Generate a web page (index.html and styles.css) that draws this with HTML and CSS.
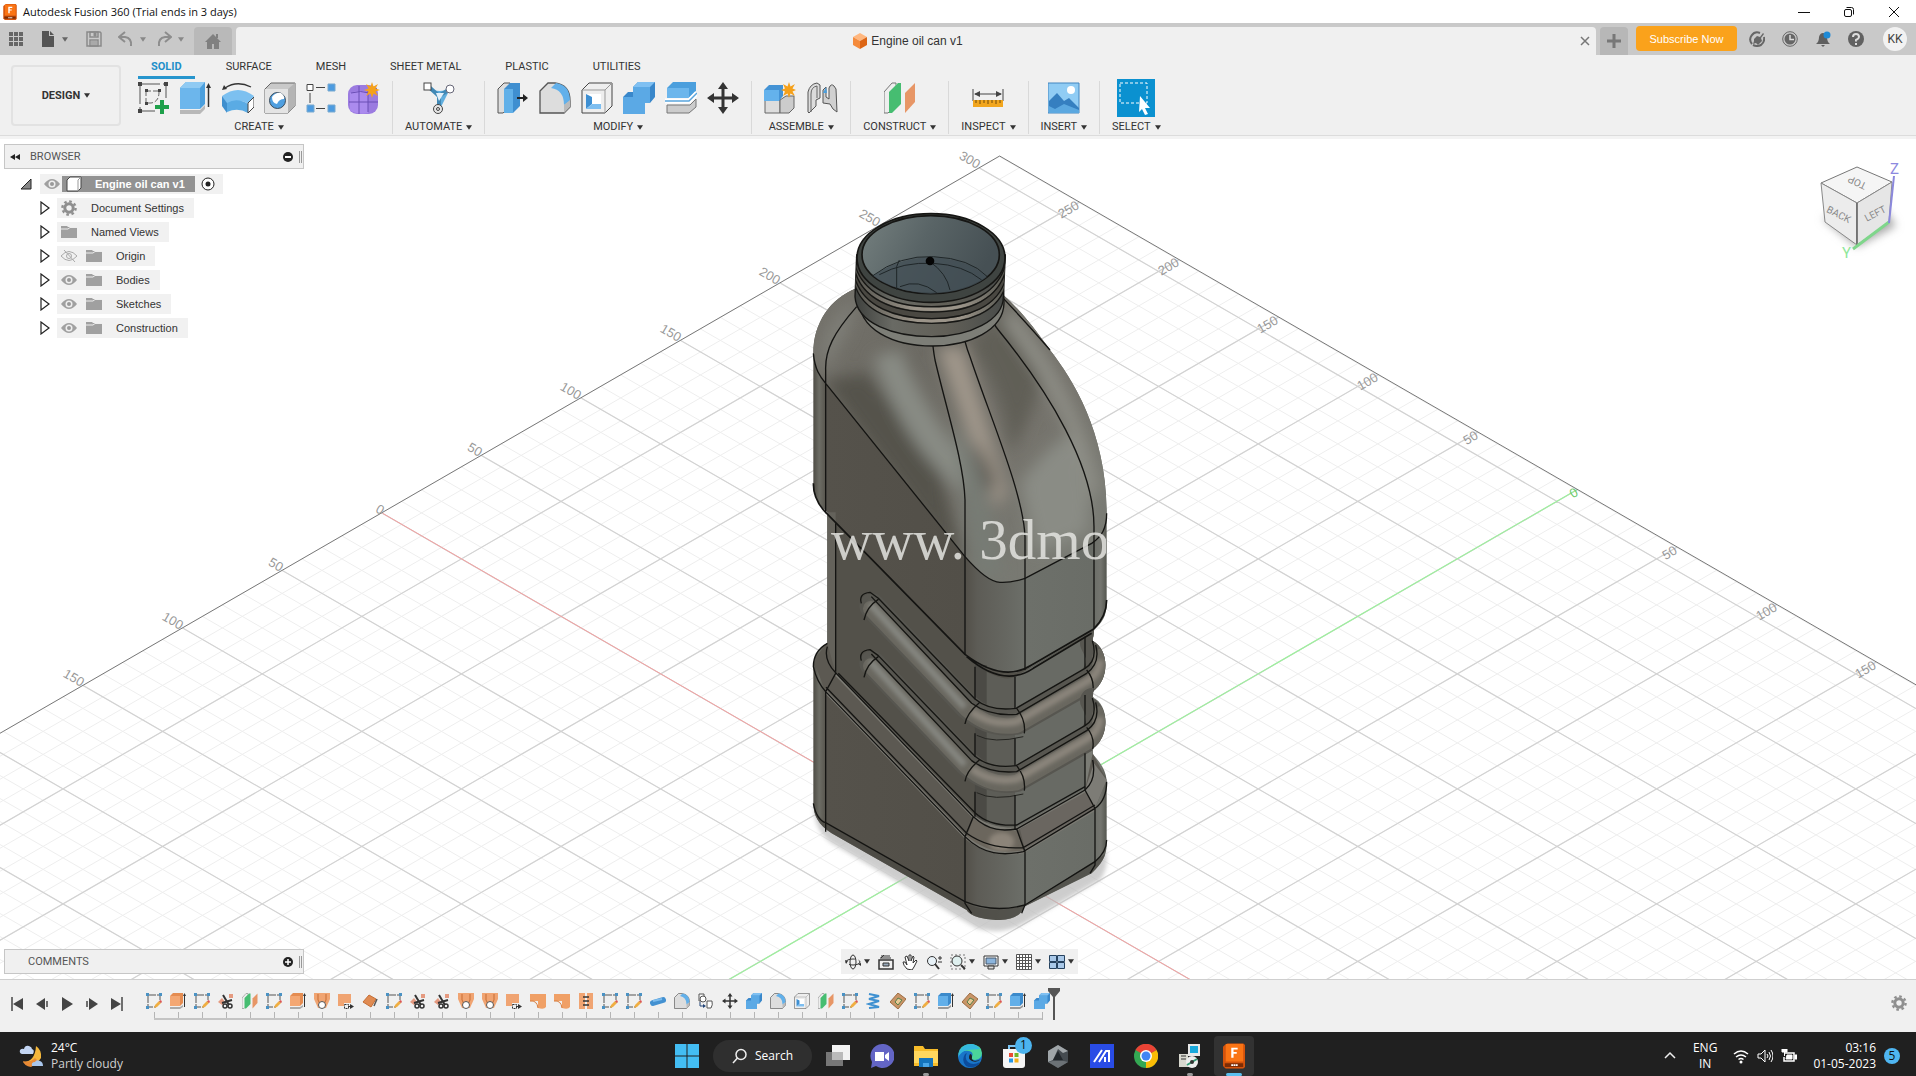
FILE: index.html
```html
<!DOCTYPE html>
<html lang="en">
<head>
<meta charset="utf-8">
<title>Autodesk Fusion 360</title>
<link rel="stylesheet" href="styles.css">
</head>
<body>
<svg class="defs" aria-hidden="true">
  <defs>
    <symbol id="caret" viewBox="0 0 8 6"><path d="M0 0h8L4 6z" fill="currentColor"/></symbol>
    <symbol id="fusion" viewBox="0 0 24 28"><path d="M2 2l3-2h17l2 2v24l-2 2H3l-3-3V4z" fill="#d4530c"/><path d="M3 1h19v19H3z" fill="#fa7414"/><path d="M9 16V5h7v2h-4.500v2.500H15v2h-3.500V16z" fill="#fff"/><path d="M2 22h20v4H2z" fill="#7d2c05"/><path d="M9 24h7" stroke="#fff" stroke-width="2" stroke-dasharray="2 .5"/></symbol>
    <symbol id="box" viewBox="0 0 14 16"><path d="M7 0l7 4-7 4-7-4z" fill="#ffb77f"/><path d="M0 4l7 4v8l-7-4z" fill="#f58b3c"/><path d="M14 4L7 8v8l7-4z" fill="#dc6514"/></symbol>

    <symbol id="sketch" viewBox="0 0 32 32"><path d="M2 2h26v14M2 2v27h15" fill="none" stroke="#555" stroke-dasharray="20 3"/><path d="M8 9h14M8 9v12h5q8-1 8-11" fill="none" stroke="#666" stroke-dasharray="5 2"/><path d="M0 0h4v4H0zM26 0h4v4h-4zM0 27h4v4H0zM7 7h3v3H7zM20 7h3v3h-3zM7 20h3v3H7z" fill="#444"/><path d="M24 18v14M17 25h14" stroke="#1ea04a" stroke-width="4"/></symbol>
    <symbol id="extrude" viewBox="0 0 32 32"><path d="M0 28h20l5-5v4l-5 5H0z" fill="#b8b8b8"/><path d="M0 6l6-6h19v22l-5 5H0z" fill="#4b9fdd"/><path d="M0 6h20v21H0z" fill="#6cb6ec"/><path d="M0 6l6-6h19l-5 6z" fill="#8fcaf3"/><path d="M28.500 25V4" stroke="#333" stroke-width="1.500"/><path d="M26 6l2.500-5L31 6z" fill="#333"/></symbol>
    <symbol id="revolve" viewBox="0 0 32 32"><path d="M3 6q12-8 26-1" fill="none" stroke="#333" stroke-width="1.300"/><path d="M0 8l2-5 3 4z" fill="#333"/><path d="M0 14q16-12 32 0l-5 8q-10-6-22 0z" fill="#7cc0f0"/><path d="M0 14l5 7v10L0 24z" fill="#3f8fce"/><path d="M5 21q10-6 21 1v9q-10-6-21-1z" fill="#5aabe4"/><path d="M26 21l6-6v10l-6 6z" fill="#fff" stroke="#444"/></symbol>
    <symbol id="hole" viewBox="0 0 32 32"><path d="M1 7l6-6h24v23l-7 7H1z" fill="#c9c9c9" stroke="#666"/><path d="M1 7h23v24H1z" fill="#e4e4e4"/><path d="M24 7l7-6v23l-7 7z" fill="#b4b4b4"/><circle cx="13.500" cy="18.500" r="8" fill="#4f9fe0" stroke="#3b4c5c"/><path d="M8 15q4-5 9-4 4 3 3 6-5 0-7 5-5-1-5-7z" fill="#fff"/></symbol>
    <symbol id="pattern" viewBox="0 0 32 32"><path d="M4 11v10M10 5.500h9M10 26.500h9" stroke="#444"/><path d="M1 2.500h6v6H1z" fill="#fff" stroke="#444"/><path d="M22 2h7v7h-7zM22 23h7v7h-7zM1 23h7v7H1z" fill="#4d9be0" stroke="#78a9cf"/></symbol>
    <symbol id="form" viewBox="0 0 32 32"><rect y="3" width="30" height="29" rx="9" fill="#9b7be0"/><path d="M2 11q10-4 18 0v20q-8 2-18-2z" fill="#ab8bee"/><path d="M11 4v28M1 20h29M20 8v22M3 11q10-3 18 0l8-5" fill="none" stroke="#6b4eb5"/><path d="M24 0l1.500 4.500L30 2l-2.500 4.500L32 8l-4.500 1.500L30 14l-4.500-2.500L24 16l-1.500-4.500L18 14l2.500-4.500L16 8l4.500-1.500L18 2l4.500 2.500z" fill="#f5a11b"/></symbol>
    <symbol id="automate" viewBox="0 0 32 32"><path d="M5 5q9 7 22 2L17 27q0-13-12-22z" fill="#61aede"/><path d="M6 5l10 9 11-7M16 14v12" fill="none" stroke="#4189b6" stroke-width="4"/><path d="M13 11l8 0-5 8z" fill="#e4f1fa"/><rect x="1" y="1" width="7" height="7" fill="#fff" stroke="#444"/><circle cx="27" cy="7" r="4" fill="#fff" stroke="#667" /><circle cx="15" cy="27" r="4.500" fill="#e6e6e6" stroke="#444"/><circle cx="15" cy="27" r="1.500" fill="none" stroke="#444"/></symbol>
    <symbol id="presspull" viewBox="0 0 32 32"><path d="M1 7l6-6h6v24l-7 6H1z" fill="#ddd" stroke="#555"/><path d="M7 7l6-6h10v23l-7 7H7z" fill="#3f8fd0"/><path d="M7 7h9v24H7z" fill="#61b0e8"/><path d="M20 16h7" stroke="#222" stroke-width="2"/><path d="M26 12l5 4-5 4z" fill="#222"/></symbol>
    <symbol id="fillet" viewBox="0 0 32 32"><path d="M1 9l8-8h7q15 2 15 18v6l-6 6H1z" fill="#ddd" stroke="#555" stroke-width="1.300"/><path d="M12 6l5-5q14 2 14 18l-6 4Q25 8 12 6z" fill="#62b0ea"/><path d="M25 23l6-5v7l-6 6z" fill="#bbb"/></symbol>
    <symbol id="shell" viewBox="0 0 32 32"><path d="M1 8l7-7h23v23l-7 7H1z" fill="#eee" stroke="#444"/><path d="M1 8h23v23M24 8l7-7" fill="none" stroke="#999"/><path d="M5 12h15v15H5z" fill="#fff"/><path d="M5 12l6 3v7l-6 5z" fill="#3e8fd2"/><path d="M5 27l6-5h9v5z" fill="#7dbef0"/></symbol>
    <symbol id="combine" viewBox="0 0 32 32"><path d="M0 15l5-5h5V5l5-5h17v15l-5 6h-5v5l-6 6H0z" fill="#3987ca"/><path d="M10 5h17v16h-5v11H0V15h10z" fill="#5ba9e5"/><path d="M10 5l5-5h17l-5 5z" fill="#7fc0f2"/></symbol>
    <symbol id="split" viewBox="0 0 32 32"><path d="M2 6l6-6h23v9l-7 7H2z" fill="#4b9fdd"/><path d="M2 6h22v10H2z" fill="#6cb6ec"/><path d="M2 23h23l6-6v8l-7 6H2z" fill="#ccc" stroke="#777"/><path d="M0 19h24l8-8" fill="none" stroke="#fff" stroke-width="5"/><path d="M0 19h24l8-8" fill="none" stroke="#5aa5dd" stroke-width="1.500"/></symbol>
    <symbol id="move" viewBox="0 0 32 32"><path d="M16 4v24M4 16h24" stroke="#333" stroke-width="3"/><path d="M16 0l5 7H11zM16 32l5-7H11zM0 16l7-5v10zM32 16l-7-5v10z" fill="#333"/></symbol>
    <symbol id="newcomp" viewBox="0 0 32 32"><path d="M1 18h15v13H1z" fill="#ddd" stroke="#666"/><path d="M16 18l6-4h8v12l-5 5h-9z" fill="#ccc" stroke="#666"/><path d="M0 8l5-5h14v11l-4 5H0z" fill="#4493d5"/><path d="M0 8h15v11H0z" fill="#64b2ec"/><path d="M25 0l1.500 4.500L31 2l-2.500 4.500L32 8l-3.500 1.500L31 14l-4.500-2.500L25 16l-1.500-4.500L19 14l2-4.500L17 8l4-1.500L19 2l4.500 2.500z" fill="#f5a11b"/></symbol>
    <symbol id="joint" viewBox="0 0 32 32"><path d="M2 10q2-8 9-9l3 2v13l-4 2v6l-7 7-1-1z" fill="#dcdcdc" stroke="#555"/><path d="M5 30V12q0-7 6-8v12" fill="none" stroke="#666"/><path d="M17 18V8l3-3v10l3 2V6q2-5 5-2l2 3 1 23-4-3-3-5-7-1z" fill="#d0d0d0" stroke="#555"/><path d="M20 5l-3 6h4z" fill="#4b9fdd"/></symbol>
    <symbol id="construct" viewBox="0 0 32 32"><path d="M0 10L8 1h4v22l-8 8H0z" fill="#eee" stroke="#777"/><path d="M5 10l9-9h1v21l-9 9H5z" fill="#eee"/><path d="M5 10l9-9h3v21l-9 9H5z" fill="#46bd71"/><path d="M21 11L31 1v19L21 31z" fill="#e79666"/></symbol>
    <symbol id="inspect" viewBox="0 0 32 32"><path d="M1 7v12M31 7v12M3 12h26" stroke="#444"/><path d="M2 12l6-3v6zM30 12l-6-3v6z" fill="#444"/><path d="M1 18h30v7H1z" fill="#f2a61e"/><path d="M4 18v3M8 18v4M12 18v3M16 18v4M20 18v3M24 18v4M28 18v3" stroke="#704b09"/></symbol>
    <symbol id="insert" viewBox="0 0 32 32"><path d="M0 1h31v30H0z" fill="#90ccf4" stroke="#4286c0"/><path d="M1 31V19l8-8 7 8 5-3 10 10v5z" fill="#357fc0"/><path d="M1 31v-7l6 3 9-5 15 6v3z" fill="#5ba8e0"/><circle cx="23" cy="8" r="4" fill="#fff"/></symbol>
    <symbol id="select" viewBox="0 0 38 38"><path d="M0 0h38v38H0z" fill="#0b91d0"/><path d="M3 4h27v20H3z" fill="none" stroke="#fff" stroke-dasharray="3 2"/><path d="M23 17l10 12-5 0 3 6-3 1-3-6-3 3z" fill="#fff"/></symbol>

    <symbol id="t-sketch" viewBox="0 0 16 16"><path d="M2 2h12v8M2 2v12h8" fill="none" stroke="#555" stroke-dasharray="8 1"/><path d="M0 0h3v3H0zM13 0h3v3h-3zM0 13h3v3H0z" fill="#4a92c4"/><path d="M8 15l1-3 4-4 2 2-4 4z" fill="#f0ae42"/><path d="M13 8l2-1 1 2-1 1z" fill="#d55"/></symbol>
    <symbol id="t-extrude-o" viewBox="0 0 16 16"><path d="M0 14h10l3-2v2l-3 2H0z" fill="#aaa"/><path d="M0 3l3-3h10v10l-3 3H0z" fill="#e58c51"/><path d="M0 3h10v10H0z" fill="#f3a773"/><path d="M14.500 14V2" stroke="#333"/><path d="M13 3l1.500-3L16 3z" fill="#333"/></symbol>
    <symbol id="t-extrude" viewBox="0 0 16 16"><path d="M0 14h10l3-2v2l-3 2H0z" fill="#999"/><path d="M0 3l3-3h10v10l-3 3H0z" fill="#3c8acb"/><path d="M0 3h10v10H0z" fill="#62afe9"/><path d="M14.500 14V2" stroke="#333"/><path d="M13 3l1.500-3L16 3z" fill="#333"/></symbol>
    <symbol id="t-trim" viewBox="0 0 16 16"><path d="M0 9l4-4 3 4-3 3zM11 1h4v4h-4z" fill="#e59a80"/><path d="M5 2l6 10M14 7L4 10" stroke="#333" stroke-width="2"/><circle cx="12" cy="13" r="2" fill="none" stroke="#333" stroke-width="1.500"/><circle cx="7" cy="13" r="2" fill="none" stroke="#333" stroke-width="1.500"/></symbol>
    <symbol id="t-loft" viewBox="0 0 16 16"><path d="M0 0h16v6l-4 9H4L0 6z" fill="#f0a472"/><path d="M4 1v6l2 4M12 1v6l-2 4" fill="none" stroke="#c76c32"/><circle cx="8" cy="12" r="3.500" fill="#fff" stroke="#555"/></symbol>
    <symbol id="t-extend" viewBox="0 0 16 16"><path d="M0 1h13v12H0z" fill="#f0a472"/><path d="M6 10h10v6H6z" fill="#f0f0f0"/><path d="M6.500 11.500h4v4h-4z" fill="none" stroke="#333" stroke-dasharray="2 1"/><path d="M10 13.500h3" stroke="#333"/><path d="M12 11l4 2.500-4 2.500z" fill="#333"/></symbol>
    <symbol id="t-patch" viewBox="0 0 16 16"><path d="M1 9L7 2l7 4-5 8z" fill="#e08b52" stroke="#c46e35"/><path d="M12 13l3-7" stroke="#555" stroke-width="1.500"/></symbol>
    <symbol id="t-fillet-o" viewBox="0 0 16 16"><path d="M0 1h16v13q-2 3-8 1V8H0z" fill="#f0a066"/><path d="M0 8q7-1 8 7" fill="none" stroke="#d67a3a"/></symbol>
    <symbol id="t-stitch" viewBox="0 0 16 16"><path d="M1 0h6v16H1zM9 0h6v16H9z" fill="#f0a472"/><path d="M5 4h6M5 8h6M5 12h6" stroke="#333" stroke-width="1.500"/></symbol>
    <symbol id="t-pipe" viewBox="0 0 16 16"><path d="M3 10l10-3" stroke="#4391d1" stroke-width="6" stroke-linecap="round"/><path d="M3 8l9-2" stroke="#7bbcee" stroke-width="2"/></symbol>
    <symbol id="t-copy" viewBox="0 0 16 16"><path d="M1 1h5v7H1zM9 8h5q1 4-1 7H9z" fill="#fff" stroke="#555"/><circle cx="5" cy="6" r="3" fill="#fff" stroke="#555"/><path d="M2 9v4h4" fill="none" stroke="#247"/><path d="M5 11l3 2-3 2z" fill="#247"/></symbol>
    <symbol id="t-coil" viewBox="0 0 16 16"><path d="M3 1l10 2-10 3 10 2-10 3 10 3-10 1" fill="none" stroke="#3f91d1" stroke-width="2"/></symbol>
    <symbol id="t-surf" viewBox="0 0 16 16"><path d="M0 9l8-9 8 6-8 10z" fill="#c99568" stroke="#9c6c41"/><path d="M5 9l3-4 4 2-4 5z" fill="#e9c894" stroke="#557f4a"/></symbol>

    <symbol id="eye" viewBox="0 0 16 12"><path d="M0 6Q8-4 16 6 8 16 0 6z" fill="#a0a0a0"/><circle cx="8" cy="6" r="3.500" fill="#eee"/><circle cx="8" cy="6" r="2" fill="#999"/></symbol>
    <symbol id="eyeoff" viewBox="0 0 16 12"><path d="M0 6Q8-3 16 6 8 15 0 6zM3 0l11 12" fill="none" stroke="#aaa"/><circle cx="8" cy="6" r="2.500" fill="none" stroke="#aaa"/></symbol>
    <symbol id="folder" viewBox="0 0 16 12"><path d="M0 0h6l1 1h9v11H0z" fill="#a0a0a0"/><path d="M0 3h7l2-1.500h7" fill="none" stroke="#eee"/></symbol>
    <symbol id="gear" viewBox="0 0 16 16"><circle cx="8" cy="8" r="4.200" fill="none" stroke="#8f8f8f" stroke-width="3"/><circle cx="8" cy="8" r="6.600" fill="none" stroke="#8f8f8f" stroke-width="2.400" stroke-dasharray="2.600 2.580"/></symbol>
    <symbol id="twist" viewBox="0 0 10 14"><path d="M1 1v12l8-6z" fill="#fff" stroke="#222" stroke-width="1.200"/></symbol>
  </defs>
</svg>

<header class="titlebar">
  <svg class="i14" viewBox="0 0 24 28"><use href="#fusion"/></svg>
  <span class="app-title">Autodesk Fusion 360 (Trial ends in 3 days)</span>
  <div class="win">
    <button aria-label="Minimize"><svg viewBox="0 0 12 12"><path d="M0 6.500h12" stroke="#111"/></svg></button>
    <button aria-label="Restore"><svg viewBox="0 0 12 12"><rect x="1.500" y="3.500" width="7" height="7" rx="1.500" fill="none" stroke="#111"/><path d="M3.500 1.500h5q2 0 2 2v5" fill="none" stroke="#111"/></svg></button>
    <button aria-label="Close"><svg viewBox="0 0 12 12"><path d="M1 1l10 10M11 1L1 11" stroke="#111"/></svg></button>
  </div>
</header>

<nav class="docbar" aria-label="Documents">
  <div class="quick">
    <button aria-label="Data panel"><svg class="i16" viewBox="0 0 16 16"><path d="M1 1h4v4H1zM6 1h4v4H6zM11 1h4v4h-4zM1 6h4v4H1zM6 6h4v4H6zM11 6h4v4h-4zM1 11h4v4H1zM6 11h4v4H6zM11 11h4v4h-4z" fill="#666"/></svg></button>
    <button class="drop" aria-label="File"><svg class="i16" viewBox="0 0 16 16"><path d="M2 0h7v5h5v11H2zM10 0l4 4h-4z" fill="#555"/></svg><svg class="car"><use href="#caret"/></svg></button>
    <button aria-label="Save"><svg class="i16" viewBox="0 0 16 16"><path d="M1 1h13l1 1v13H1z" fill="none" stroke="#8a8a8a" stroke-width="1.500"/><path d="M4 1h8v5H4zM4 9h8v6H4z" fill="none" stroke="#8a8a8a" stroke-width="1.500"/><path d="M8 2h2v3H8zM5 11h6M5 13h6" fill="#8a8a8a" stroke="#8a8a8a"/></svg></button>
    <button class="drop dim" aria-label="Undo"><svg class="i16" viewBox="0 0 16 16"><path d="M7 1L1 6l6 5" fill="none" stroke="#8d8d8d" stroke-width="2"/><path d="M2 6h5q7 1 6 9" fill="none" stroke="#8d8d8d" stroke-width="2"/></svg><svg class="car"><use href="#caret"/></svg></button>
    <button class="drop dim" aria-label="Redo"><svg class="i16" viewBox="0 0 16 16"><path d="M9 1l6 5-6 5" fill="none" stroke="#8d8d8d" stroke-width="2"/><path d="M14 6H9Q2 7 3 15" fill="none" stroke="#8d8d8d" stroke-width="2"/></svg><svg class="car"><use href="#caret"/></svg></button>
  </div>
  <button class="hometab" aria-label="Home"><svg class="i16" viewBox="0 0 16 16"><path d="M8 1l8 8h-2v7H9v-5H7v5H2V9H0z" fill="#808080"/><path d="M11 1h2v4h-2z" fill="#808080"/></svg></button>
  <div class="doctab">
    <span class="doc"><svg class="i14" viewBox="0 0 14 16"><use href="#box"/></svg>Engine oil can v1</span>
    <button aria-label="Close document"><svg viewBox="0 0 10 10" class="i10"><path d="M1 1l8 8M9 1L1 9" stroke="#777" stroke-width="1.500"/></svg></button>
  </div>
  <button class="newtab" aria-label="New document"><svg class="i14" viewBox="0 0 14 14"><path d="M7 0v14M0 7h14" stroke="#777" stroke-width="3"/></svg></button>
  <button class="subscribe">Subscribe Now</button>
  <div class="account">
    <button aria-label="Extensions"><svg class="i16" viewBox="0 0 16 16"><path d="M3 13A7 7 0 0 1 11 2M15 6q1 5-3 8-4 2-8 0" fill="none" stroke="#666" stroke-width="2"/><path d="M5 8l3-3 3 1 3-4 1 1-3 4 1 3-4 4-2-2-3 1 1-3z" fill="#666"/></svg></button>
    <button aria-label="Job status"><svg class="i16" viewBox="0 0 16 16"><circle cx="8" cy="8" r="7.300" fill="none" stroke="#666"/><circle cx="8" cy="8" r="5.500" fill="#666"/><path d="M8 4v4.500h4" fill="none" stroke="#ddd" stroke-width="1.500"/></svg></button>
    <button aria-label="Notifications"><svg class="i16" viewBox="0 0 16 16"><path d="M1 13q3-2 3-7 1-4 4-4 3 0 4 4 0 5 3 7zM6 14h4l-2 2z" fill="#5f5f5f"/><circle cx="12" cy="4" r="3.500" fill="#1e8ad6"/></svg></button>
    <button aria-label="Help"><svg class="i16" viewBox="0 0 16 16"><circle cx="8" cy="8" r="8" fill="#616161"/><path d="M5 6q0-3 3-3t3 3q0 1.500-3 3v1.500M8 12v2" fill="none" stroke="#ddd" stroke-width="2"/></svg></button>
    <button class="avatar">KK</button>
  </div>
</nav>

<section class="ribbon" aria-label="Toolbar">
  <button class="design">DESIGN <svg class="car"><use href="#caret"/></svg></button>
  <div class="tools">
    <div class="tabs">
      <button class="on">SOLID</button><button>SURFACE</button><button>MESH</button><button>SHEET METAL</button><button>PLASTIC</button><button>UTILITIES</button>
    </div>
    <div class="groups">
      <div class="group"><div class="icons"><svg><use href="#sketch"/></svg><svg><use href="#extrude"/></svg><svg><use href="#revolve"/></svg><svg><use href="#hole"/></svg><svg><use href="#pattern"/></svg><svg><use href="#form"/></svg></div><button>CREATE <svg class="car"><use href="#caret"/></svg></button></div>
      <div class="group"><div class="icons"><svg><use href="#automate"/></svg></div><button>AUTOMATE <svg class="car"><use href="#caret"/></svg></button></div>
      <div class="group"><div class="icons"><svg><use href="#presspull"/></svg><svg><use href="#fillet"/></svg><svg><use href="#shell"/></svg><svg><use href="#combine"/></svg><svg><use href="#split"/></svg><svg><use href="#move"/></svg></div><button>MODIFY <svg class="car"><use href="#caret"/></svg></button></div>
      <div class="group"><div class="icons"><svg><use href="#newcomp"/></svg><svg><use href="#joint"/></svg></div><button>ASSEMBLE <svg class="car"><use href="#caret"/></svg></button></div>
      <div class="group"><div class="icons"><svg><use href="#construct"/></svg></div><button>CONSTRUCT <svg class="car"><use href="#caret"/></svg></button></div>
      <div class="group"><div class="icons"><svg><use href="#inspect"/></svg></div><button>INSPECT <svg class="car"><use href="#caret"/></svg></button></div>
      <div class="group"><div class="icons"><svg><use href="#insert"/></svg></div><button>INSERT <svg class="car"><use href="#caret"/></svg></button></div>
      <div class="group"><div class="icons"><svg class="big"><use href="#select"/></svg></div><button>SELECT <svg class="car"><use href="#caret"/></svg></button></div>
    </div>
  </div>
</section>

<main class="canvas">
  <svg class="scene" viewBox="0 139 1916 840" preserveAspectRatio="xMidYMid slice" role="img" aria-label="Engine oil can model on the ground grid">
    <defs>
      <clipPath id="ground"><path d="M999.600 156L2200 849V1600H-600V1080z"/></clipPath>
      <clipPath id="bodyclip"><path id="outline" d="M200 265C120 295 70 370 70 460V850C70 890 90 920 112 937V1330C85 1345 70 1370 70 1400V1810C70 1845 85 1875 125 1900L530 2130C545 2155 600 2160 630 2160C670 2158 695 2145 702 2120L905 2020C935 1990 950 1970 950 1930V1740C947 1710 930 1685 908 1662V1645C958 1610 960 1515 908 1492V1475C958 1440 960 1350 908 1322L912 1290C935 1270 950 1250 950 1210V940C950 700 850 540 780 450C730 380 690 330 640 285z"/></clipPath>
      <clipPath id="shoulder"><path d="M200 265C120 295 70 370 70 460C75 510 90 530 107 550L525 1070C560 1110 600 1147 630 1147C665 1149 690 1140 705 1135L905 1030C935 1010 950 985 950 940C950 700 850 540 780 450C730 380 690 330 640 285z"/></clipPath>
      <clipPath id="neckclip"><path d="M200 165L195 290C200 370 310 410 425 410C540 410 640 360 640 290L646 165z"/></clipPath>
      <linearGradient id="corner" gradientUnits="userSpaceOnUse" x1="70" x2="950" y1="0" y2="0"><stop offset="0" stop-color="#4e4c45"/><stop offset=".02" stop-color="#6d6d65"/><stop offset=".045" stop-color="#55524b"/><stop offset=".515" stop-color="#524f48"/><stop offset=".56" stop-color="#5d5c56"/><stop offset=".66" stop-color="#666761"/><stop offset=".73" stop-color="#6d706a"/><stop offset=".95" stop-color="#6a6d67"/><stop offset=".98" stop-color="#74756f"/><stop offset="1" stop-color="#555750"/></linearGradient>
      <linearGradient id="sh" x1="0" y1="0" x2="1" y2="1"><stop offset="0" stop-color="#75736c"/><stop offset=".3" stop-color="#6c6a63"/><stop offset=".6" stop-color="#75736c"/><stop offset="1" stop-color="#7b7e77"/></linearGradient>
      <linearGradient id="neck" x1="0" x2="1"><stop offset="0" stop-color="#3f413e"/><stop offset=".25" stop-color="#696a64"/><stop offset=".6" stop-color="#626058"/><stop offset="1" stop-color="#484b49"/></linearGradient>
      <linearGradient id="thread" x1="0" x2="1"><stop offset="0" stop-color="#55544e"/><stop offset=".4" stop-color="#9b9489"/><stop offset=".7" stop-color="#9b9489"/><stop offset="1" stop-color="#55564f"/></linearGradient>
      <linearGradient id="inside" x1="0" x2="1" y1="0" y2=".3"><stop offset="0" stop-color="#75807f"/><stop offset=".5" stop-color="#596466"/><stop offset="1" stop-color="#465054"/></linearGradient>
      <filter id="soft" x="-30%" y="-30%" width="160%" height="160%"><feGaussianBlur stdDeviation="22"/></filter>
      <filter id="soft2" x="-30%" y="-30%" width="160%" height="160%"><feGaussianBlur stdDeviation="7"/></filter>
    </defs>
    <g clip-path="url(#ground)">
      <path id="minor" fill="none" stroke="#eeeeee"/>
      <path id="major" fill="none" stroke="#d2d2d2" stroke-width="1.200"/>
    </g>
    <path d="M382.600 513.300L1300 1043" stroke="#f4a0a0"/>
    <path d="M1577.700 489.300L659 1020" stroke="#9df09d" stroke-width="1.200"/>
    <path d="M-100 791L999.600 156L2100 791" fill="none" stroke="#777"/>
    <g class="ticks" text-anchor="end">
      <text transform="translate(977 169) rotate(30)">300</text><text transform="translate(877 227) rotate(30)">250</text><text transform="translate(777 285) rotate(30)">200</text><text transform="translate(678 342) rotate(30)">150</text><text transform="translate(578 400) rotate(30)">100</text><text transform="translate(479 457) rotate(30)">50</text><text transform="translate(381 515) rotate(30)">0</text><text transform="translate(280 572) rotate(30)">50</text><text transform="translate(180 630) rotate(30)">100</text><text transform="translate(81 687) rotate(30)">150</text>
      <text transform="translate(1080 208) rotate(-30)">250</text><text transform="translate(1180 265) rotate(-30)">200</text><text transform="translate(1279 323) rotate(-30)">150</text><text transform="translate(1379 380) rotate(-30)">100</text><text transform="translate(1479 438) rotate(-30)">50</text><text transform="translate(1579 495) rotate(-30)" class="green">0</text><text transform="translate(1678 553) rotate(-30)">50</text><text transform="translate(1778 610) rotate(-30)">100</text><text transform="translate(1877 668) rotate(-30)">150</text>
    </g>

    <g transform="translate(790 200) scale(.33333)">
      <path d="M72 1815Q70 1890 125 1930L560 2185Q640 2210 720 2160L930 2040Q960 2000 945 1940L630 1900z" fill="#b9b9b9" opacity=".7" filter="url(#soft2)"/>
      <use href="#outline" fill="url(#corner)"/>
      <g clip-path="url(#bodyclip)">
        <path d="M112 937L525 1365Q640 1450 725 1400L912 1290V1500L908 1640V1700L700 1900H555L112 1400z" fill="#53514a"/>
        <path d="M555 1395Q640 1450 675 1430V1890H555z" fill="#5d5d57"/><path d="M555 1395h35v490h-35z" fill="#4b4a45"/>
        <path d="M675 1430L912 1295V1760L675 1890z" fill="#686a64"/>
        <path d="M112 937h25v480l-25-40z" fill="#64625b"/>
        <path d="M885 1300h27v470h-27z" fill="#7b7c75"/>
        <!-- chamfer round the foot -->
        <path d="M70 1380L112 1330L137 1420L550 1850Q600 1895 680 1885L885 1770L908 1660L950 1740L915 1825L705 1955Q600 1985 525 1910L107 1475z" fill="#5c5952"/>
        <path d="M690 1888L885 1770L915 1825L705 1950z" fill="#6a6660"/>
        <path d="M550 1855Q610 1895 680 1887L700 1952Q600 1975 530 1912z" fill="#6b665d"/>
        <ellipse cx="635" cy="1925" rx="38" ry="28" fill="#8c8479" filter="url(#soft2)"/>
        <path d="M107 1475L525 1910Q600 1975 700 1955L915 1828M137 1422L550 1850Q600 1890 680 1887L885 1772" fill="none" stroke="#7b7a73" stroke-width="9"/>
        <path d="M885 1770L912 1690L950 1740L915 1825z" fill="#7d7c76"/>
        <!-- rounded bottom -->
        <path d="M70 1830L107 1870L525 2110Q610 2145 705 2115L950 1960V2200H70z" fill="#4a4943" opacity=".7"/>
      </g>
      <g clip-path="url(#shoulder)">
        <path d="M60 250h900v920H60z" fill="url(#sh)"/>
        <g filter="url(#soft)">
          <path d="M100 540L230 520L440 780L525 1080L480 1060z" fill="#55534c"/>
          <path d="M250 470L330 450Q400 620 510 760L520 880Q340 740 250 470z" fill="#888b84"/>
          <path d="M540 430Q640 560 660 760Q740 640 760 480L640 340z" fill="#615e57"/>
          <path d="M440 440L520 440Q600 700 650 880L620 920Q510 640 440 440z" fill="#a0978b"/>
          <path d="M490 650Q560 760 600 930L640 1130H560L520 900z" fill="#777b75"/>
          <path d="M550 720Q600 780 620 870L590 860z" fill="#4d4b45"/>
          <path d="M690 850Q780 730 850 700L900 900L890 1000L740 1060z" fill="#8a8c85"/>
          <path d="M660 320Q860 560 930 860L905 900Q850 650 640 370z" fill="#8f8f87"/>
          <path d="M90 450Q120 340 200 300L170 400Q110 480 110 530z" fill="#7f7f78"/>
        </g>
      </g>
      <!-- ribs -->
      <g fill="none" stroke-linejoin="round">
        <g id="rib">
          <g clip-path="url(#bodyclip)">
            <path d="M246 1218L530 1518Q600 1580 680 1566L895 1443Q932 1410 925 1365L908 1330" stroke="#575650" stroke-width="76" stroke-linecap="round"/>
            <path d="M242 1226L530 1528Q600 1590 680 1576L895 1452Q935 1430 930 1370" stroke="#69675f" stroke-width="46" stroke-linecap="round"/>
            <path d="M240 1212L524 1522" stroke="#858680" stroke-width="20" filter="url(#soft2)"/>
            <path d="M545 1535Q610 1580 680 1565L890 1445Q930 1420 930 1380" stroke="#8b857b" stroke-width="22" filter="url(#soft2)"/>
          </g>
          <path d="M214 1210Q205 1180 240 1177L265 1195L555 1497Q600 1535 678 1525L885 1405Q925 1380 907 1322M222 1260Q230 1220 265 1198M244 1190L545 1510Q600 1550 680 1543L890 1420Q932 1390 917 1335M525 1572Q530 1540 568 1508M680 1525Q708 1560 703 1600M890 1410Q915 1440 908 1475" stroke="#151512" stroke-width="4"/>
          <path d="M560 1606Q610 1632 700 1610" stroke="#252521" stroke-width="3"/>
        </g>
        <use href="#rib" y="172"/>
      </g>
      <!-- edges -->
      <g fill="none" stroke="#141412" stroke-width="4">
        <path d="M200 320C130 400 105 450 107 510V940M70 460C75 510 90 530 107 550L525 1070C560 1110 600 1147 630 1147C665 1149 690 1140 705 1135L905 1030C935 1010 950 985 950 940"/>
        <path d="M427 410Q428 440 435 480C470 630 522 790 525 900V1365M520 390Q522 425 540 470C600 650 700 880 705 1010V1410M608 350Q608 370 625 390C780 580 912 800 912 980V1285M640 295Q720 380 780 450"/>
        <path d="M70 850C70 890 90 920 107 937L525 1363Q640 1450 725 1395L910 1288Q950 1250 950 1200M530 1370Q640 1465 730 1405L905 1300" stroke-width="5"/>
        <path d="M137 970V1415M555 1400V1498M675 1430V1525M885 1310V1405M555 1600V1670M675 1615V1697M885 1485V1577M555 1775V1850M675 1785V1888M885 1660V1770"/>
        <path d="M112 1330C85 1345 70 1370 70 1400Q80 1445 107 1475L525 1910C580 1965 640 1968 700 1955L915 1825Q950 1800 950 1745M112 1340Q100 1380 137 1418L550 1850C600 1895 640 1893 680 1887L885 1770Q920 1740 908 1680M108 1462L530 1900Q600 1950 700 1943L915 1815M145 1420L555 1838Q600 1880 680 1875L885 1760M137 1420L107 1475V1895M550 1850L525 1910V2110L545 2140M680 1887L705 1955V2115L695 2140M885 1770L915 1825V1995L900 2020"/>
        <path d="M70 1810Q80 1860 107 1868L525 2105Q610 2140 705 2115L915 1985Q950 1955 950 1920"/>
      </g>
      <!-- neck -->
      <path d="M205 290C205 390 310 438 428 438C540 438 640 390 642 310L640 250H200z" fill="#7d7e77" stroke="#161614" stroke-width="4"/>
      <path d="M200 165L195 290C200 370 310 410 425 410C540 410 640 360 640 290L646 165z" fill="url(#neck)" stroke="#161614" stroke-width="4"/>
      <g fill="none" clip-path="url(#neckclip)">
        <path d="M195 210C215 300 310 349 425 350C540 350 625 300 648 210" stroke="#4a4842" stroke-width="30"/>
        <path d="M192 190C210 290 310 328 425 328C540 328 630 290 650 190M192 235C215 330 320 364 425 363C530 363 630 330 650 235" stroke="url(#thread)" stroke-width="10"/>
        <path d="M192 200C210 298 310 336 425 336C540 336 630 298 650 200M192 180C210 280 310 320 425 320C540 320 630 280 650 180M192 245C215 340 320 370 425 370C530 370 630 340 650 245M192 225C215 322 320 356 425 356C530 356 630 322 650 225" stroke="#161614" stroke-width="4"/>
      </g>
      <ellipse cx="423" cy="174" rx="222" ry="133" fill="#3f4441" stroke="#161614" stroke-width="5"/>
      <ellipse cx="422" cy="164" rx="206" ry="117" fill="url(#inside)" stroke="#161614" stroke-width="5"/>
      <path d="M250 228Q330 170 430 172Q540 180 590 232Q530 278 422 281Q310 275 250 228z" fill="#414e54" opacity=".75"/>
      <g fill="none" stroke="#1f2628" stroke-width="3"><path d="M247 228Q330 165 430 170Q540 175 592 230M268 224Q340 185 430 190Q520 195 575 240M320 270V200L328 180M420 185Q470 220 480 270M330 260Q385 235 440 278"/></g>
      <circle cx="420" cy="183" r="13" fill="#050505"/>
    </g>
    <clipPath id="markclip"><path d="M826 450h280v150H826z"/></clipPath>
    <g clip-path="url(#markclip)"><text class="mark" x="831" y="559">www. 3dmo</text></g>
  </svg>

  <aside class="browser">
    <div class="panel"><svg class="rew" viewBox="0 0 10 6"><path d="M5 0v6L0 3zM10 0v6L5 3z" fill="#222"/></svg><h2>BROWSER</h2><button aria-label="Collapse"><svg class="i10" viewBox="0 0 10 10"><circle cx="5" cy="5" r="5" fill="#222"/><path d="M2 5h6" stroke="#fff" stroke-width="2"/></svg></button><i class="grip"></i></div>
    <ul class="tree">
      <li class="root"><svg class="open" viewBox="0 0 12 12"><path d="M1 11L11 1v10z" fill="#888" stroke="#222"/></svg><div class="row"><svg class="eye"><use href="#eye"/></svg><span class="sel"><svg class="i16" viewBox="0 0 16 16"><path d="M1 4l3-3h11v11l-3 3H1z" fill="#fff" stroke="#444"/><path d="M12 4v11M12 4l3-3" stroke="#999"/></svg>Engine oil can v1</span><svg class="i14" viewBox="0 0 14 14"><circle cx="7" cy="7" r="6" fill="#fff" stroke="#222"/><circle cx="7" cy="7" r="2.500" fill="#222"/></svg></div></li>
      <li><svg class="twist"><use href="#twist"/></svg><div class="row"><svg class="i16"><use href="#gear"/></svg><span>Document Settings</span></div></li>
      <li><svg class="twist"><use href="#twist"/></svg><div class="row"><svg class="eye"><use href="#folder"/></svg><span>Named Views</span></div></li>
      <li><svg class="twist"><use href="#twist"/></svg><div class="row"><svg class="eye"><use href="#eyeoff"/></svg><svg class="eye"><use href="#folder"/></svg><span>Origin</span></div></li>
      <li><svg class="twist"><use href="#twist"/></svg><div class="row"><svg class="eye"><use href="#eye"/></svg><svg class="eye"><use href="#folder"/></svg><span>Bodies</span></div></li>
      <li><svg class="twist"><use href="#twist"/></svg><div class="row"><svg class="eye"><use href="#eye"/></svg><svg class="eye"><use href="#folder"/></svg><span>Sketches</span></div></li>
      <li><svg class="twist"><use href="#twist"/></svg><div class="row"><svg class="eye"><use href="#eye"/></svg><svg class="eye"><use href="#folder"/></svg><span>Construction</span></div></li>
    </ul>
  </aside>

  <svg class="cube" viewBox="0 0 110 120" role="img" aria-label="View cube">
    <defs><filter id="cs" x="-30%" y="-30%" width="160%" height="160%"><feGaussianBlur stdDeviation="4"/></filter></defs>
    <path d="M16 68L51 97L90 76L80 60z" fill="#aaa" filter="url(#cs)"/>
    <path d="M51 17L86 32L51 53L15 33z" fill="#f5f5f5" stroke="#777"/><path d="M15 33L51 53V95L19 72z" fill="#ececec" stroke="#888"/><path d="M86 32L51 53V95L83 72z" fill="#e6e6e6" stroke="#888"/><path d="M51 53v42" stroke="#444"/>
    <path d="M83 72L47 99" stroke="#7fd68b" stroke-width="3"/><path d="M88 26L83 73" stroke="#8b88dc" stroke-width="2"/>
    <text class="face" transform="translate(51 33) rotate(205)" text-anchor="middle" dy="4">TOP</text><text class="face" transform="translate(33 64) rotate(27)" text-anchor="middle" dy="4">BACK</text><text class="face" transform="translate(69 63) rotate(-27)" text-anchor="middle" dy="4">LEFT</text>
    <text class="axis" x="84" y="24" fill="#8d89df">Z</text><text class="axis" x="36" y="108" fill="#8fe89b">Y</text>
  </svg>

  <div class="panel comments"><h2>COMMENTS</h2><button aria-label="Expand comments"><svg class="i10" viewBox="0 0 10 10"><circle cx="5" cy="5" r="5" fill="#222"/><path d="M2 5h6M5 2v6" stroke="#fff" stroke-width="1.500"/></svg></button><i class="grip"></i></div>

  <div class="navbar">
    <button aria-label="Orbit"><svg class="i16" viewBox="0 0 16 16"><ellipse cx="8" cy="8" rx="7" ry="3" fill="none" stroke="#333" stroke-dasharray="12 3"/><ellipse cx="8" cy="8" rx="3" ry="7" fill="none" stroke="#333"/><path d="M0 6l3 1-2 3zM13 10l3-1v3z" fill="#333"/></svg><svg class="car"><use href="#caret"/></svg></button>
    <button aria-label="Look at"><svg class="i16" viewBox="0 0 16 16"><path d="M1 6h14v9H1z" fill="none" stroke="#333" stroke-width="1.500"/><path d="M5 9h6v3H5z" fill="#9ab" stroke="#333"/><path d="M2 4h11M3 4l3-3M3 2h9" stroke="#333"/></svg></button>
    <button aria-label="Pan"><svg class="i16" viewBox="0 0 16 16"><path d="M5 15Q1 11 1 8l2 0 2 3L3 3l2-1 2 5V1h2v6l2-5 1 1-1 6 3-3 1 1-3 6-2 3z" fill="#fff" stroke="#333"/></svg></button>
    <button aria-label="Zoom"><svg class="i16" viewBox="0 0 16 16"><circle cx="6" cy="7" r="4.500" fill="#e8f2f8" stroke="#333"/><path d="M9 10l4 5" stroke="#333" stroke-width="2"/><path d="M12 4h4M14 2v4M12 8h4" stroke="#333"/></svg></button>
    <button aria-label="Fit"><svg class="i16" viewBox="0 0 16 16"><path d="M1 1h14v14H1z" fill="none" stroke="#777" stroke-dasharray="2 2"/><circle cx="7" cy="7" r="5" fill="#dff0ef" stroke="#333"/><path d="M11 11l4 4" stroke="#333" stroke-width="2"/></svg><svg class="car"><use href="#caret"/></svg></button>
    <button aria-label="Display settings"><svg class="i16" viewBox="0 0 16 16"><path d="M1 2h14v10H1z" fill="#fff" stroke="#333"/><path d="M3 4h10v6H3z" fill="#8bb4dc" stroke="#456"/><path d="M5 12h6v3H5z" fill="#ddd" stroke="#333"/></svg><svg class="car"><use href="#caret"/></svg></button>
    <button aria-label="Grid and snaps"><svg class="i16" viewBox="0 0 16 16"><path d="M.5.500h15v15H.5zM3.500.500v15M6.500.500v15M9.500.500v15M12.500.500v15M.5 3.500h15M.5 6.500h15M.5 9.500h15M.5 12.500h15" fill="#fff" stroke="#555"/></svg><svg class="car"><use href="#caret"/></svg></button>
    <button aria-label="Viewports"><svg class="i16" viewBox="0 0 16 16"><path d="M.5 1.500h7v6h-7zM8.500 1.500h7v6h-7zM.5 8.500h7v6h-7zM8.500 8.500h7v6h-7z" fill="#a9c8e8" stroke="#26425f"/></svg><svg class="car"><use href="#caret"/></svg></button>
  </div>
</main>

<section class="timeline" aria-label="Timeline">
  <div class="play">
    <button aria-label="Start"><svg viewBox="0 0 12 14"><path d="M1 0v14" stroke="#444" stroke-width="1.500"/><path d="M12 1v12L2 7z" fill="#444"/></svg></button>
    <button aria-label="Back"><svg viewBox="0 0 12 14"><path d="M9 1v12L0 7z" fill="#444"/><path d="M11 4v6" stroke="#444" stroke-width="1.500"/></svg></button>
    <button aria-label="Play"><svg viewBox="0 0 12 14"><path d="M1 0v14l11-7z" fill="#444"/></svg></button>
    <button aria-label="Forward"><svg viewBox="0 0 12 14"><path d="M3 1v12l9-6z" fill="#444"/><path d="M1 4v6" stroke="#444" stroke-width="1.500"/></svg></button>
    <button aria-label="End"><svg viewBox="0 0 12 14"><path d="M11 0v14" stroke="#444" stroke-width="1.500"/><path d="M0 1v12l10-6z" fill="#444"/></svg></button>
  </div>
  <ol class="steps">
    <li><svg><use href="#t-sketch"/></svg></li><li><svg><use href="#t-extrude-o"/></svg></li><li><svg><use href="#t-sketch"/></svg></li><li><svg><use href="#t-trim"/></svg></li><li><svg><use href="#construct"/></svg></li><li><svg><use href="#t-sketch"/></svg></li><li><svg><use href="#t-extrude-o"/></svg></li><li><svg><use href="#t-loft"/></svg></li><li><svg><use href="#t-extend"/></svg></li><li><svg><use href="#t-patch"/></svg></li>
    <li><svg><use href="#t-sketch"/></svg></li><li><svg><use href="#t-trim"/></svg></li><li><svg><use href="#t-trim"/></svg></li><li><svg><use href="#t-loft"/></svg></li><li><svg><use href="#t-loft"/></svg></li><li><svg><use href="#t-extend"/></svg></li><li><svg><use href="#t-fillet-o"/></svg></li><li><svg><use href="#t-fillet-o"/></svg></li><li><svg><use href="#t-stitch"/></svg></li><li><svg><use href="#t-sketch"/></svg></li>
    <li><svg><use href="#t-sketch"/></svg></li><li><svg><use href="#t-pipe"/></svg></li><li><svg><use href="#fillet"/></svg></li><li><svg><use href="#t-copy"/></svg></li><li><svg><use href="#move"/></svg></li><li><svg><use href="#combine"/></svg></li><li><svg><use href="#fillet"/></svg></li><li><svg><use href="#shell"/></svg></li><li><svg><use href="#construct"/></svg></li><li><svg><use href="#t-sketch"/></svg></li>
    <li><svg><use href="#t-coil"/></svg></li><li><svg><use href="#t-surf"/></svg></li><li><svg><use href="#t-sketch"/></svg></li><li><svg><use href="#t-extrude"/></svg></li><li><svg><use href="#t-surf"/></svg></li><li><svg><use href="#t-sketch"/></svg></li><li><svg><use href="#t-extrude"/></svg></li><li><svg><use href="#combine"/></svg></li>
  </ol>
  <svg class="marker" viewBox="0 0 12 32"><path d="M0 0h12v3L7 9v23H5V9L0 3z" fill="#555"/></svg>
  <button class="settings" aria-label="Timeline settings"><svg class="i16"><use href="#gear"/></svg></button>
</section>

<footer class="taskbar">
  <button class="weather"><svg viewBox="0 0 24 24"><path d="M17 2q6 4 5 12-3 5-9 6-6 1-9-2 12 0 13-16z" fill="#f4b73c"/><path d="M4 17q7 2 12-3l4 4-8 5q-7-1-8-6z" fill="#e98a34"/><path d="M3 10q-3-1-2-4 2-2 4-1 1-4 5-3 3 1 3 3 3 1 1 5z" fill="#c3d6f4"/><path d="M13 22q-1-4 3-4 1-3 5-1 3 1 3 5z" fill="#a9c6ec"/></svg><span>24°C<br><em>Partly cloudy</em></span></button>
  <div class="apps">
    <button aria-label="Start"><svg viewBox="0 0 24 24"><path d="M0 0h11.500v11.500H0zM12.500 0H24v11.500H12.500zM0 12.500h11.500V24H0zM12.500 12.500H24V24H12.500z" fill="#43bdf3"/></svg></button>
    <button class="search"><svg class="i16" viewBox="0 0 16 16"><circle cx="9" cy="6.500" r="5" fill="none" stroke="#eee" stroke-width="1.500"/><path d="M5.500 10L1 15" stroke="#eee" stroke-width="1.500"/></svg>Search</button>
    <button aria-label="Task view"><svg viewBox="0 0 24 24"><path d="M0 8h17v14H0z" fill="#777"/><path d="M6 1h18v15H6z" fill="#f3f3f3"/><path d="M6 8h11v8H6z" fill="#bbb"/></svg></button>
    <button aria-label="Chat"><svg viewBox="0 0 24 24"><path d="M12 0a12 12 0 1 1-6 22L1 24l1-6A12 12 0 0 1 12 0z" fill="#6365c5"/><path d="M5 8h9v9H5zM15 11l4-3v9l-4-3z" fill="#fff"/></svg></button>
    <button aria-label="File Explorer" class="run"><svg viewBox="0 0 24 24"><path d="M0 2h9l2 3h13v17H0z" fill="#f8bd2a"/><path d="M0 7h24v12H0z" fill="#ffd75e"/><path d="M5 14h14v9H5z" fill="#1474bd"/><path d="M9 19h6v4H9z" fill="#49a6e8"/></svg></button>
    <button aria-label="Edge"><svg viewBox="0 0 24 24"><circle cx="12" cy="12" r="12" fill="#1976c9"/><path d="M0 11Q2 0 13 0q11 1 11 9 0 6-7 7-4 0-3-3 2-5-3-6Q4 6 0 11z" fill="#4bd59a"/><path d="M2 6Q6 0 13 0q5 0 9 5L9 6Q4 7 0 13z" fill="#35b8df"/><path d="M9 9q-3 5 1 9 5 4 12 0l-2 3q-6 4-12 1-5-5-1-12z" fill="#0c4c9c"/><path d="M12 10q2 0 2 3-1 3 3 4 3 0 6-2-4 4-9 2-5-2-2-7z" fill="#202020"/></svg></button>
    <button aria-label="Store, 1 update" class="store"><svg viewBox="0 0 24 24"><path d="M7 5V2h10v3" fill="none" stroke="#7cc5f4" stroke-width="2"/><path d="M1 5h22v16q0 3-3 3H4q-3 0-3-3z" fill="#f5f5f5"/><path d="M7 9h4v4H7z" fill="#ea4a32"/><path d="M12.500 9h4v4h-4z" fill="#72b626"/><path d="M7 14.500h4v4H7z" fill="#2396e8"/><path d="M12.500 14.500h4v4h-4z" fill="#f5ae17"/></svg><b>1</b></button>
    <button aria-label="Unity"><svg viewBox="0 0 24 24"><path d="M12 1l10 6v11l-10 6L2 18V7z" fill="#454b50"/><path d="M12 1l10 6-5 2-5-4-5 11-5 2V7z" fill="#a0a6a9"/><path d="M12 7l5 9H7z" fill="#23282c"/><path d="M7 17h11l4 1-10 6L2 18z" fill="#6c7276"/></svg></button>
    <button aria-label="MyASUS"><svg viewBox="0 0 24 24"><path d="M0 0h24v24H0z" fill="#294ce6"/><path d="M4 18L12 6M9 18L16 7h3v11M15 13v5" fill="none" stroke="#fff" stroke-width="2"/></svg></button>
    <button aria-label="Chrome"><svg viewBox="0 0 24 24"><circle cx="12" cy="12" r="12" fill="#34a853"/><path d="M12 12L1.500 6A12 12 0 0 1 22.500 6z" fill="#ea4335"/><path d="M12 12L22.500 6A12 12 0 0 1 12 24z" fill="#fbbc05"/><path d="M12 6h10.500L17 9z" fill="#ea4335"/><circle cx="12" cy="12" r="6" fill="#fff"/><circle cx="12" cy="12" r="4.500" fill="#4285f4"/></svg></button>
    <button aria-label="Installer" class="run"><svg viewBox="0 0 24 24"><path d="M10 0h12v12H10z" fill="#e8e8e8"/><path d="M12 2h8v7h-8z" fill="#19a9dc"/><path d="M1 10h9v13H1z" fill="#d8d8cf"/><path d="M3 12h5M3 15h5" stroke="#333"/><circle cx="14" cy="18" r="6" fill="#eee"/><path d="M14 18l5-3M14 18l-5 3" stroke="#329a74" stroke-width="2"/><circle cx="14" cy="18" r="2" fill="#333"/></svg></button>
    <button aria-label="Fusion 360" class="active"><svg viewBox="0 0 24 28"><use href="#fusion"/></svg></button>
  </div>
  <div class="tray">
    <button aria-label="Hidden icons"><svg class="i14" viewBox="0 0 14 14"><path d="M2 9l5-5 5 5" fill="none" stroke="#eee" stroke-width="1.500"/></svg></button>
    <span class="lang">ENG<br>IN</span>
    <span class="status"><svg class="i16" viewBox="0 0 16 16"><path d="M1 6q7-6 14 0M3 9q5-4 10 0M5.500 11.500q2.500-2 5 0" fill="none" stroke="#fff" stroke-width="1.500"/><circle cx="8" cy="14" r="1.500" fill="#fff"/></svg><svg class="i16" viewBox="0 0 16 16"><path d="M1 6h3l4-4v12l-4-4H1z" fill="none" stroke="#fff"/><path d="M10 6q2 2 0 4M12 4q3 4 0 8M14 2q4 6 0 12" fill="none" stroke="#fff"/></svg><svg class="i16" viewBox="0 0 16 16"><path d="M4 5h9v8H3V9" fill="none" stroke="#fff" stroke-width="1.500"/><path d="M6 7h5v4H5zM14 7h2v4h-2zM1 1v3h5V1M3.500 4v4" fill="#fff" stroke="#fff"/></svg></span>
    <span class="clock">03:16<br>01-05-2023</span>
    <span class="count">5</span>
  </div>
</footer>
<script src="grid.js"></script>
</body>
</html>
```

FILE: styles.css
```css
* { box-sizing: border-box; }
body { margin: 0; height: 100vh; display: flex; flex-direction: column; overflow: hidden; background: #fff; color: #333; font: 11px/14px "Liberation Sans", Arial, sans-serif; }
button { margin: 0; padding: 0; border: 0; background: none; color: inherit; font: inherit; display: flex; align-items: center; justify-content: center; }
svg { display: block; flex: none; }
h2, ul, ol { margin: 0; padding: 0; list-style: none; }
.defs { position: absolute; width: 0; height: 0; }
.i10 { width: 10px; height: 10px; }
.i14 { width: 14px; height: 16px; }
.i16 { width: 16px; height: 16px; }
.car { width: 6px; height: 5px; margin-left: 4px; }

.titlebar { flex: none; height: 23px; display: flex; align-items: center; gap: 6px; padding-left: 3px; background: #fff; color: #111; }
.app-title { font: 11px/16px "Open Sans", sans-serif; }
.win { margin-left: auto; display: flex; }
.win button { width: 45px; height: 20px; }
.win svg { width: 12px; height: 12px; }

.docbar { flex: none; height: 32px; display: flex; align-items: flex-end; background: #c9c9c9; color: #666; }
.quick { align-self: stretch; width: 194px; display: flex; align-items: center; gap: 16px; padding-left: 8px; }
.quick .drop { margin-right: 2px; }
.quick .drop .car { margin-left: 6px; }
.quick .dim { margin-right: -6px; color: #888; }
.hometab { width: 38px; height: 28px; background: #b9b9b9; border-radius: 4px 4px 0 0; }
.doctab { flex: 1; height: 28px; margin-left: 4px; display: flex; align-items: center; padding-right: 6px; background: #f0f0f0; border-radius: 4px 4px 0 0; color: #333; font-size: 12px; }
.doc { flex: 1; display: flex; align-items: center; justify-content: center; gap: 4px; }
.newtab { width: 28px; height: 28px; margin-left: 4px; background: #b7b7b7; border-radius: 4px 4px 0 0; }
.subscribe { width: 101px; height: 25px; margin: 0 12px 4px 8px; background: #faa21b; border-radius: 4px; color: #fff; align-self: flex-end; }
.account { height: 32px; display: flex; align-items: center; gap: 17px; padding-right: 9px; }
.avatar { width: 24px; height: 24px; margin-left: 2px; border-radius: 50%; background: #f2f2f2; color: #444; font: 12px/14px Roboto, sans-serif; }

.ribbon { flex: none; height: 84px; display: flex; background: #f0f0f0; border-bottom: 3px solid #f3f3f3; box-shadow: inset 0 -1px #dcdcdc; font: 11px/14px Roboto, sans-serif; }
.design { width: 110px; height: 61px; margin: 10px 3px 0 11px; border: 2px solid #e2e2e2; border-radius: 4px; font-weight: 700; color: #333; }
.tabs { display: flex; gap: 18px; padding-left: 14px; }
.tabs button { height: 24px; padding: 2px 13px 0; border-bottom: 3px solid transparent; }
.tabs .on { color: #1f8fc9; font-weight: 700; border-color: #2695cd; }
.groups { display: flex; }
.group { height: 53px; margin-top: 2px; padding: 0 12px; border-left: 1px solid #d9d9d9; display: flex; flex-direction: column; align-items: center; justify-content: space-between; }
.group:first-child { padding-left: 14px; border-left: 0; }
.icons { height: 34px; display: flex; align-items: center; gap: 10px; }
.icons svg { width: 32px; height: 32px; }
.icons .big { width: 38px; height: 38px; }

.canvas { flex: 1; min-height: 0; display: grid; grid-template: minmax(0, 1fr) auto / auto minmax(0, 1fr); position: relative; overflow: hidden; }
.scene { position: absolute; inset: 0; width: 100%; height: 100%; }
.ticks { font: 13px "Liberation Sans", sans-serif; fill: #999; }
.ticks .green { fill: #6cc86c; }
.mark { font: 57px "Liberation Serif", serif; fill: #e4e4e0; fill-opacity: .85; }
.browser { position: relative; width: 304px; padding: 5px 0 0 4px; }
.panel { position: relative; width: 300px; height: 25px; display: flex; align-items: center; gap: 10px; padding: 0 1px 0 5px; background: #f0f0f0; border: 1px solid #c6c6c6; font: 11px/14px Roboto, sans-serif; color: #555; }
.panel h2 { flex: 1; font: inherit; }
.rew { width: 10px; height: 6px; }
.panel button { margin-right: -4px; }
.grip { width: 3px; height: 12px; border: 1px solid #999; border-width: 0 1px; }
.tree { display: flex; flex-direction: column; gap: 4px; padding-top: 5px; }
.tree li { display: flex; align-items: center; gap: 7px; height: 20px; padding-left: 36px; }
.tree .root { padding-left: 16px; gap: 8px; }
.row { display: flex; align-items: center; gap: 9px; height: 20px; padding: 0 10px 0 4px; background: #f1f1f1; }
.row span { padding-left: 5px; }
.row .sel { display: flex; align-items: center; gap: 13px; height: 16px; margin-left: -4px; padding: 0 10px 0 4px; background: #929292; color: #fff; font-weight: 700; }
.root .row { gap: 6px; padding-right: 8px; }
.eye { width: 16px; height: 12px; }
.twist { width: 10px; height: 14px; }
.open { width: 12px; height: 12px; }
.cube { position: relative; width: 110px; height: 120px; margin-top: 11px; justify-self: end; }
.face { font: 10px Roboto, sans-serif; fill: #888; }
.axis { font: 15px Roboto, sans-serif; }
.comments { margin: 0 0 5px 4px; padding-left: 23px; align-self: end; }
.navbar { position: absolute; left: 50%; bottom: 5px; margin-left: -117px; height: 25px; display: flex; align-items: center; gap: 8px; padding: 0 4px; background: #f0f0f0; }
.navbar .car { margin-left: 3px; }

.timeline { flex: none; height: 53px; display: flex; background: #f0f0f0; border-top: 1px solid #cfcfcf; }
.play { display: flex; padding: 0 13px 5px 4px; }
.play button { width: 25px; }
.play svg { width: 12px; height: 14px; }
.steps { position: relative; display: flex; height: 40px; }
.steps::after { content: ""; position: absolute; left: 12px; right: 12px; bottom: 0; height: 2px; background: #c4c4c4; }
.steps li { width: 24px; display: flex; flex-direction: column; align-items: center; justify-content: flex-end; gap: 3px; }
.steps li::after { content: ""; width: 1px; height: 8px; background: #b5b5b5; }
.steps svg { width: 16px; height: 16px; }
.marker { width: 12px; height: 32px; margin: 8px 0 0 -6px; }
.settings { margin: 0 9px 6px auto; }

.taskbar { flex: none; height: 44px; display: grid; grid-template-columns: 1fr auto 1fr; background: #202020; color: #fff; font: 12px/16px "Open Sans", sans-serif; }
.weather { justify-self: start; gap: 8px; padding: 4px 0 0 19px; text-align: left; }
.weather svg { width: 24px; height: 24px; }
.weather em { font-style: normal; color: #d0d0d0; }
.apps { display: flex; padding: 4px 0 0 3px; }
.apps button { position: relative; width: 44px; height: 40px; }
.apps svg { width: 24px; height: 24px; }
.apps .search { width: 99px; height: 32px; margin: 4px 4px 0; gap: 7px; border-radius: 16px; background: #2f2f2f; }
.apps .search .i16 { width: 16px; height: 16px; }
.apps .active { width: 40px; margin-left: 2px; background: #323232; border-radius: 4px; }
.apps .active svg { width: 22px; height: 26px; }
.apps .active::after, .apps .run::after { content: ""; position: absolute; bottom: 0; width: 6px; height: 3px; border-radius: 2px; background: #999; }
.apps .active::after { width: 16px; background: #5bc0f0; }
.store b { position: absolute; top: 1px; right: 4px; width: 17px; height: 17px; border-radius: 50%; background: #4cb4ef; color: #111; font-weight: 400; }
.tray { justify-self: end; display: flex; align-items: center; gap: 16px; padding: 4px 16px 0 0; }
.lang { text-align: center; }
.status { display: flex; gap: 8px; }
.clock { text-align: right; }
.count { width: 16px; height: 16px; margin-left: -8px; border-radius: 50%; background: #4fb6f2; color: #111; text-align: center; }
```

FILE: grid.js
```js
// Ground grid: two families of parallel lines through the model origin.
const origin = { x: 959.4, y: 846.4 };
const cell = { x: 19.92, y: 11.5 };
const reach = 90;
const span = 60;

function lines(step) {
  const dx = reach * cell.x;
  const dy = reach * cell.y;
  let d = "";
  for (let i = -span; i <= span; i += step) {
    const x = origin.x + i * cell.x;
    const down = origin.y - i * cell.y;
    const up = origin.y + i * cell.y;
    d += `M${x - dx} ${down - dy}L${x + dx} ${down + dy}`;
    d += `M${x + dx} ${up - dy}L${x - dx} ${up + dy}`;
  }
  return d;
}

document.getElementById("minor").setAttribute("d", lines(1));
document.getElementById("major").setAttribute("d", lines(5));
```
